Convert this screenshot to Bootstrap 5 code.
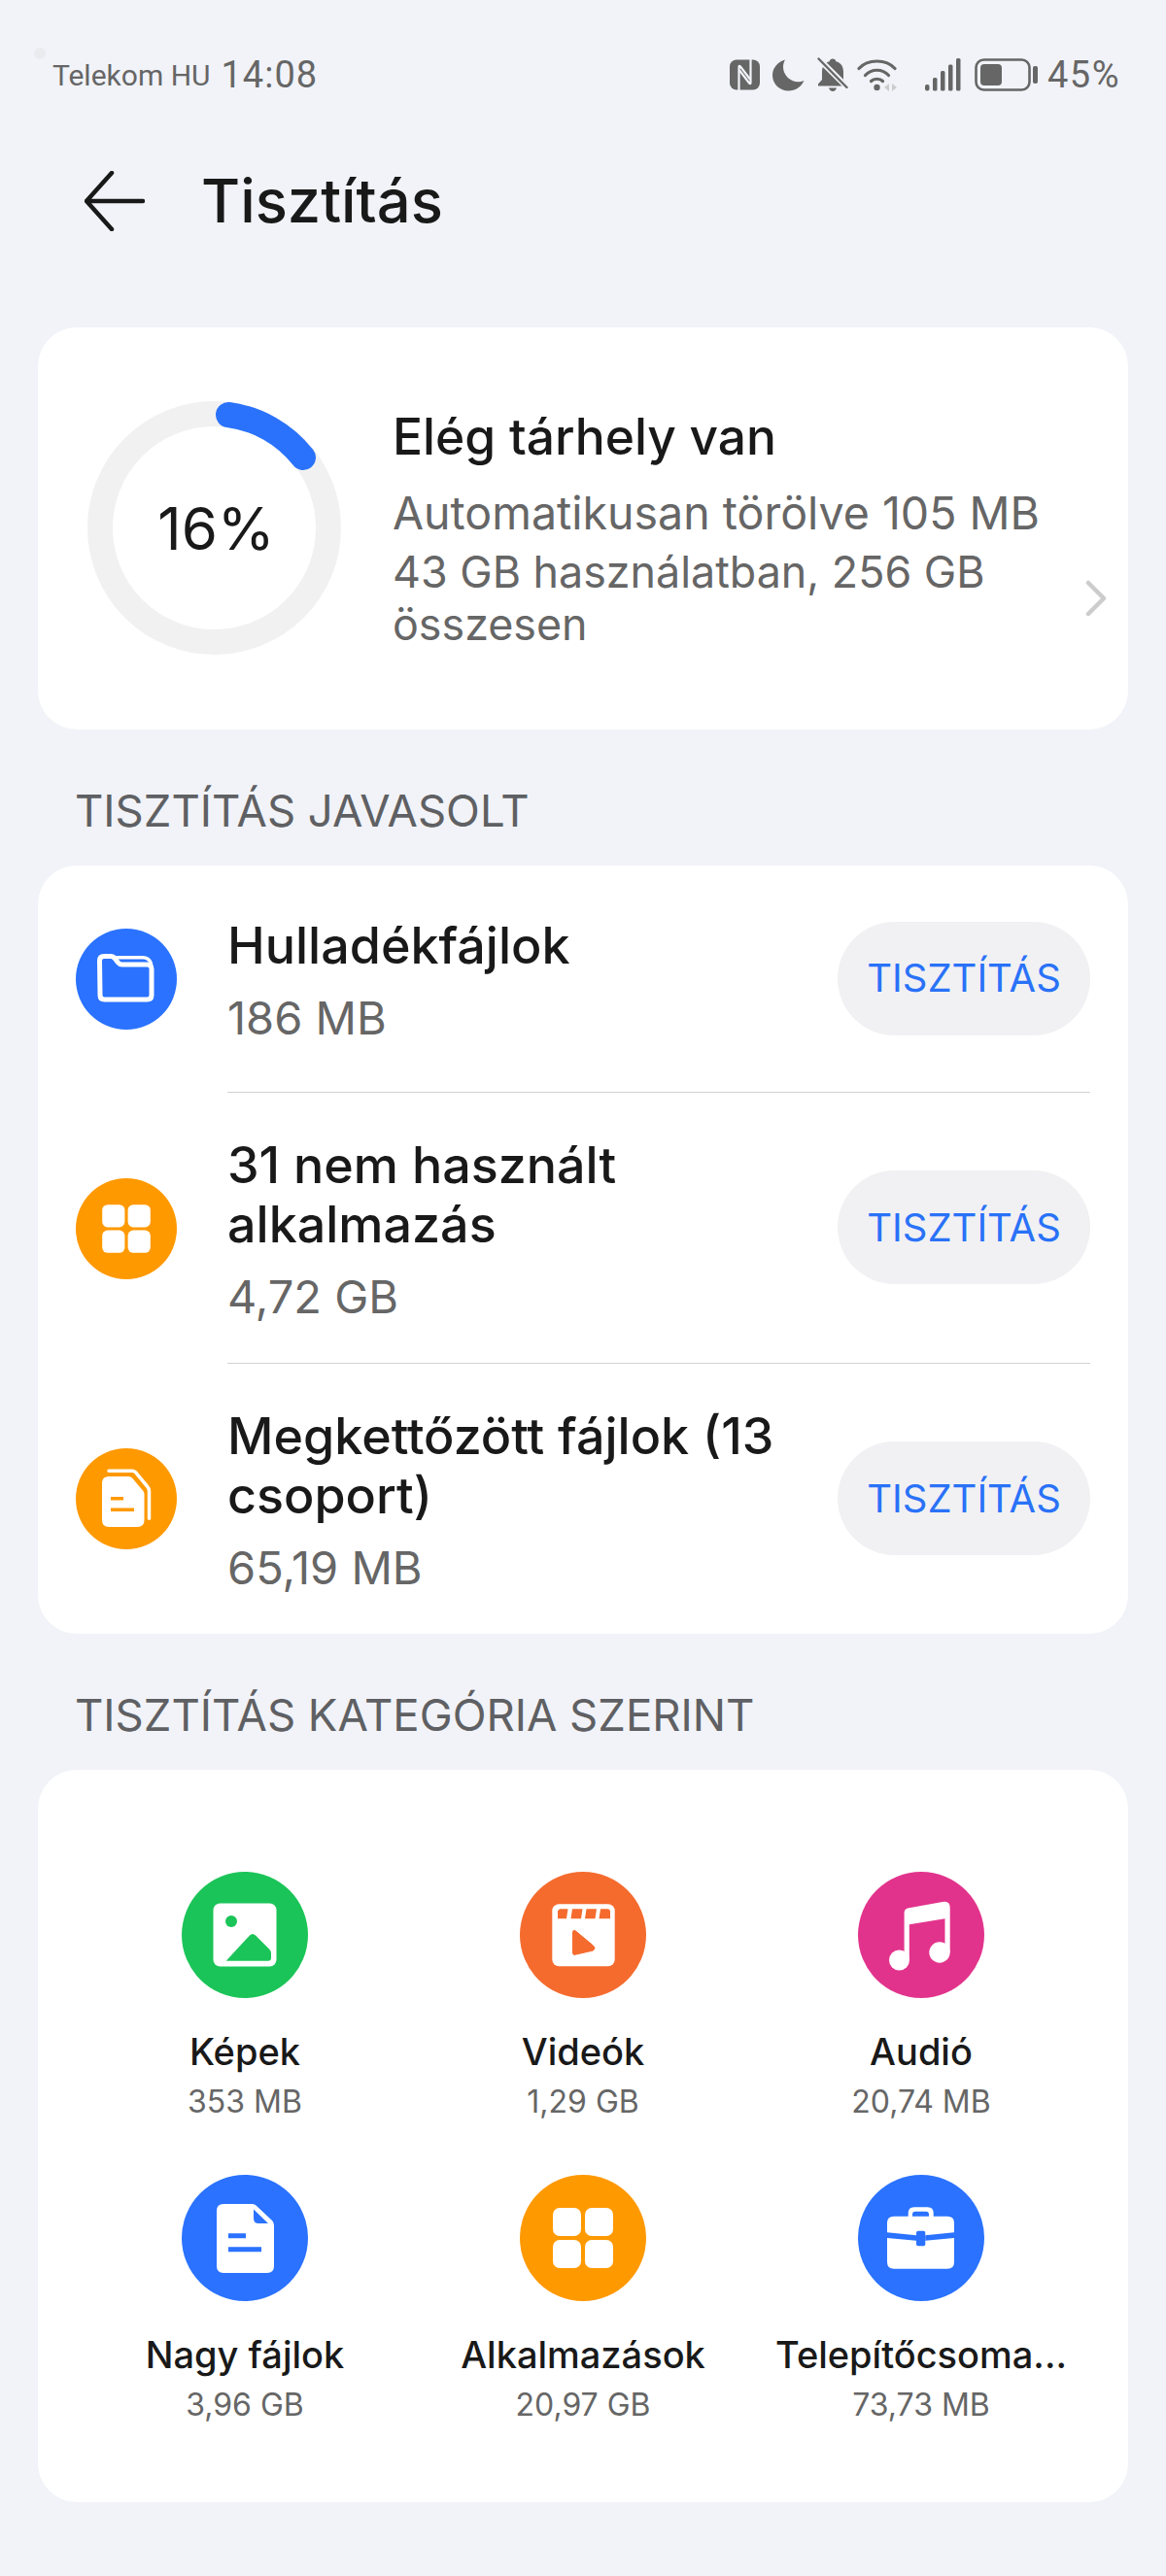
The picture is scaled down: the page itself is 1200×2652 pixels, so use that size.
<!DOCTYPE html>
<html lang="hu">
<head>
    <meta charset="UTF-8">
    <meta name="viewport" content="width=device-width, initial-scale=1.0">
    <title>Tisztítás</title>
    <link href="https://cdn.jsdelivr.net/npm/bootstrap@5.3.0/dist/css/bootstrap.min.css" rel="stylesheet">
    <style>
        body {
            background-color: #f1f3f8;
            font-family: Inter, Roboto, "Liberation Sans", sans-serif;
            color: #191919;
        }
        .screen { padding: 45px 39px 0; position: relative; }
        .rec-dot {
            position: absolute; left: 35px; top: 49px;
            width: 12px; height: 12px; border-radius: 50%; background: #e9ebef;
        }
        .status-bar {
            height: 64px; padding: 0 8px 0 15px;
            color: #666; fill: #666;
        }
        .carrier { font-family: Roboto, sans-serif; font-size: 30px; margin-right: 11px; }
        .clock { font-family: Roboto, sans-serif; font-size: 38px; letter-spacing: 1px; }
        .battery-pct { font-family: Roboto, sans-serif; font-size: 38px; letter-spacing: 1.5px; margin-left: 9px; }
        .status-icons svg { display: block; }
        .gap-13 { margin-left: 13px; }
        .gap-9 { margin-left: 9px; }
        .gap-28 { margin-left: 28px; }
        .gap-14 { margin-left: 14px; }
        .top-bar { height: 196px; margin-bottom: 32px; padding-left: 48px; }
        .top-bar h1 { font-size: 61.5px; font-weight: 500; margin: 0 0 0 58px; line-height: 80px; }
        .panel { border-radius: 40px; background: #fff; }
        .panel-storage { height: 414px; padding: 76px 22px 0 51px; }
        .ring { width: 261px; height: 261px; flex-shrink: 0; }
        .ring-label { font-size: 60px; padding-left: 4px; }
        .storage-text { margin-left: 53px; padding-top: 4px; }
        .storage-text h2 { font-size: 51.5px; font-weight: 500; line-height: 64px; margin: 0 0 20px; }
        .storage-text p { font-size: 46.5px; line-height: 54px; color: #666; margin: 0 0 7px; }
        .storage-text p.storage-total { font-size: 44.8px; }
        .chevron { margin-top: 184px; flex-shrink: 0; }
        .section-title { font-size: 45.5px; line-height: 44px; color: #5f6063; padding: 62px 38px 34px; margin: 0; font-weight: 400; }
        .clean-item { padding-left: 39px; }
        .item-icon { width: 104px; height: 104px; flex-shrink: 0; margin-right: 52px; }
        .item-body { padding: 40px 0 41px; margin-right: 39px; min-height: 234px; border-bottom: 1px solid #d2d2d2; }
        .clean-item:last-child .item-body { border-bottom: 0; }
        .item-text { padding-top: 4px; }
        .item-title { font-size: 52px; line-height: 61px; font-weight: 500; }
        .item-size { font-size: 47px; line-height: 54px; color: #666; margin-top: 17px; }
        .btn-clean {
            width: 260px; height: 117px; flex-shrink: 0; padding: 0;
            background: #f1f1f3; color: #2a72f8; font-size: 40px; border: 0; margin-left: 28px;
        }
        .panel-cats { padding: 105px 39px 79px; }
        .cat-cell { text-align: center; height: 312px; }
        .cat-cell:nth-child(n+4) { height: 258px; }
        .cat-icon { width: 130px; height: 130px; margin: 0 auto 25px; }
        .cat-name { font-size: 38px; line-height: 60px; font-weight: 500; }
        .cat-size { font-size: 32px; line-height: 44px; color: #666; }
        .tone-blue { background: #2a72ff; }
        .tone-orange { background: #ff9900; }
        .tone-green { background: #1bc458; }
        .tone-red { background: #f56b2e; }
        .tone-pink { background: #e2338c; }
        .rounded-circle svg { display: block; width: 100%; height: 100%; }
    </style>
</head>
<body>
    <svg width="0" height="0" class="position-absolute">
        <symbol id="apps" viewBox="0 0 130 130">
            <rect x="34" y="34" width="29" height="29" rx="7" fill="#fff"/>
            <rect x="67" y="34" width="29" height="29" rx="7" fill="#fff"/>
            <rect x="34" y="67" width="29" height="29" rx="7" fill="#fff"/>
            <rect x="67" y="67" width="29" height="29" rx="7" fill="#fff"/>
        </symbol>
    </svg>

    <div class="screen">
        <div class="rec-dot"></div>

        <!-- status bar -->
        <div class="status-bar d-flex align-items-center justify-content-between">
            <div class="d-flex align-items-center">
                <span class="carrier">Telekom HU</span>
                <span class="clock">14:08</span>
            </div>
            <div class="status-icons d-flex align-items-center">
                <svg width="31" height="32" viewBox="0 0 31 32">
                    <rect x="0" y="0.5" width="31" height="31" rx="7"/>
                    <g fill="none" stroke="#f1f3f8" stroke-width="2.200" stroke-linecap="round">
                        <path d="M9.500 32V8q0-2 1.500-.5L20.500 20"/>
                        <path d="M21.500 0V24q0 2-1.500 .5L10.500 12"/>
                    </g>
                </svg>
                <svg width="33" height="33" viewBox="0 0 33 33" class="gap-13">
                    <path d="M13 0.500C5.500 2.500 0 9 0 16.500 0 25.500 7.500 32.500 16.500 32.500c7 0 13-4 16-10.500-2 1-4 1.300-6 1.300C18 23.300 11 16 11 8c0-2.500.7-5.200 2-7.500z"/>
                </svg>
                <svg width="32" height="36" viewBox="0 0 32 36" class="gap-13">
                    <path d="M16 1.500c1.800 0 3 1 3.300 2.700C24.500 5.500 27 9.500 27 15v8l4 4.500v2H1v-2l4-4.500v-8C5 9.500 7.500 5.500 12.700 4.200 13 2.500 14.200 1.500 16 1.500z"/>
                    <path d="M12 31.500h8c-.6 2.200-2 3.500-4 3.500s-3.400-1.300-4-3.500z"/>
                    <path d="M1 1l30 30" stroke="#f1f3f8" stroke-width="6"/>
                    <path d="M1.500 1.500l29 29.500" stroke="#666" stroke-width="2.400" stroke-linecap="round"/>
                </svg>
                <svg width="42" height="34" viewBox="0 0 42 34" class="gap-9">
                    <g fill="none" stroke="#666" stroke-width="3.200" stroke-linecap="round">
                        <path d="M2 10.500C11 .5 30 .5 39 10.500"/>
                        <path d="M8.500 17.500C15 10.500 26 10.500 32.500 17.500"/>
                        <path d="M14.500 23.500C17.500 20.500 23.500 20.500 26.500 23.500"/>
                    </g>
                    <circle cx="20.500" cy="30" r="3.200"/>
                    <path d="M33 26l-5 4 5 4zM36 26l5 4-5 4z" fill="#ccc"/>
                </svg>
                <svg width="37" height="34" viewBox="0 0 37 34" class="gap-28">
                    <rect x="0" y="27" width="4.500" height="6.500" rx="2"/>
                    <rect x="8" y="20" width="4.500" height="13.500" rx="1.500"/>
                    <rect x="16" y="13" width="4.500" height="20.500" rx="1.500"/>
                    <rect x="24" y="6.500" width="4.500" height="27" rx="1.500"/>
                    <rect x="32" y="0" width="4.500" height="33.500" rx="1.500"/>
                </svg>
                <svg width="66" height="34" viewBox="0 0 66 34" class="gap-14">
                    <rect x="1.500" y="1.500" width="55" height="31" rx="8" fill="none" stroke="#666" stroke-width="2.600"/>
                    <rect x="6" y="6" width="22" height="22" rx="4"/>
                    <rect x="60" y="8" width="5" height="18" rx="2"/>
                </svg>
                <span class="battery-pct">45%</span>
            </div>
        </div>

        <!-- title bar -->
        <div class="top-bar d-flex align-items-center">
            <svg width="62" height="62" viewBox="0 0 62 62" fill="none" stroke="#191919" stroke-width="4.500" stroke-linecap="round" stroke-linejoin="round">
                <path d="M28 2L2 31l26 29M2 31h58"/>
            </svg>
            <h1>Tisztítás</h1>
        </div>

        <!-- storage summary -->
        <div class="card border-0 panel panel-storage d-flex flex-row align-items-start">
            <div class="ring position-relative">
                <svg width="261" height="261" viewBox="0 0 261 261" fill="none">
                    <circle cx="130.500" cy="130.500" r="117.500" stroke="#f1f1f1" stroke-width="26"/>
                    <path d="M145 14A117.500 117.500 0 0 1 222 58" stroke="#2a72fb" stroke-width="26" stroke-linecap="round"/>
                </svg>
                <div class="ring-label position-absolute top-0 start-0 w-100 h-100 d-flex align-items-center justify-content-center">16%</div>
            </div>
            <div class="storage-text flex-grow-1">
                <h2>Elég tárhely van</h2>
                <p>Automatikusan törölve 105 MB</p>
                <p class="storage-total">43 GB használatban, 256 GB összesen</p>
            </div>
            <svg class="chevron" width="22" height="38" viewBox="0 0 22 38" fill="none" stroke="#ccc" stroke-width="4.500" stroke-linecap="round" stroke-linejoin="round">
                <path d="M3 3l16 16L3 35"/>
            </svg>
        </div>

        <!-- recommended -->
        <h3 class="section-title">TISZTÍTÁS JAVASOLT</h3>
        <div class="card border-0 panel">
            <div class="clean-item d-flex align-items-center">
                <div class="item-icon rounded-circle tone-blue">
                    <svg viewBox="0 0 104 104">
                        <path d="M24.500 33q0-4.500 4.500-4.500h7q2.500 0 4 2l3.500 4.500q1.500 2 4 2h26q4.500 0 4.500 4.500v27q0 4.500-4.500 4.500h-44q-4.500 0-4.500-4.500z" fill="none" stroke="#fff" stroke-width="5" stroke-linejoin="round"/>
                        <path d="M38 29.800h31q6 0 8.500 6" fill="none" stroke="#fff" stroke-width="3.500" stroke-linecap="round"/>
                    </svg>
                </div>
                <div class="item-body d-flex align-items-center flex-grow-1">
                    <div class="item-text flex-grow-1">
                        <div class="item-title">Hulladékfájlok</div>
                        <div class="item-size">186 MB</div>
                    </div>
                    <button type="button" class="btn btn-clean rounded-pill">TISZTÍTÁS</button>
                </div>
            </div>
            <div class="clean-item d-flex align-items-center">
                <div class="item-icon rounded-circle tone-orange">
                    <svg viewBox="0 0 130 130"><use href="#apps"/></svg>
                </div>
                <div class="item-body d-flex align-items-center flex-grow-1">
                    <div class="item-text flex-grow-1">
                        <div class="item-title">31 nem használt alkalmazás</div>
                        <div class="item-size">4,72 GB</div>
                    </div>
                    <button type="button" class="btn btn-clean rounded-pill">TISZTÍTÁS</button>
                </div>
            </div>
            <div class="clean-item d-flex align-items-center">
                <div class="item-icon rounded-circle tone-orange">
                    <svg viewBox="0 0 104 104">
                        <path d="M34 29h20.500q2 0 3.500 1.500l11 13q1.500 1.500 1.500 3.500v27q0 7-7 7h-29.500q-7 0-7-7v-38q0-7 7-7z" fill="#fff"/>
                        <path d="M34 23.200h24q2 0 3.500 1.500l12 14.500q2 2 2 5v28" fill="none" stroke="#fff" stroke-width="3.500" stroke-linecap="round"/>
                        <path d="M36 50h13v3.500H36zM36 61.500h24v3.500H36z" fill="#ff9900"/>
                    </svg>
                </div>
                <div class="item-body d-flex align-items-center flex-grow-1">
                    <div class="item-text flex-grow-1">
                        <div class="item-title">Megkettőzött fájlok (13 csoport)</div>
                        <div class="item-size">65,19 MB</div>
                    </div>
                    <button type="button" class="btn btn-clean rounded-pill">TISZTÍTÁS</button>
                </div>
            </div>
        </div>

        <!-- by category -->
        <h3 class="section-title">TISZTÍTÁS KATEGÓRIA SZERINT</h3>
        <div class="card border-0 panel panel-cats">
            <div class="row g-0">
                <div class="col-4 cat-cell">
                    <div class="cat-icon rounded-circle tone-green">
                        <svg viewBox="0 0 130 130">
                            <rect x="32.500" y="32.500" width="65" height="65" rx="7" fill="#fff"/>
                            <circle cx="51" cy="51" r="6" fill="#1bc458"/>
                            <path d="M45.700 91.700L70 65.500q3-3 6 0L90 79.500q2 2 2 4.500v4.500q0 3.200-3 3.200z" fill="#1bc458"/>
                        </svg>
                    </div>
                    <div class="cat-name">Képek</div>
                    <div class="cat-size">353 MB</div>
                </div>
                <div class="col-4 cat-cell">
                    <div class="cat-icon rounded-circle tone-red">
                        <svg viewBox="0 0 130 130">
                            <rect x="33.300" y="33.300" width="64.400" height="64" rx="7" fill="#fff"/>
                            <path d="M41 38.300h8.500l-1.500 10h-9v-8zM54 38.300h10.500l-1.500 10H52.500zM68.500 38.300H79l-1.500 10H67zM83 38.300h7q3 0 3 3v7H81.500z" fill="#f56b2e"/>
                            <path d="M54.500 63q0-4 3-2l18 15q3 2.500 0 5L58 85q-3.500 1.500-3.500-2z" fill="#f56b2e" stroke="#f56b2e" stroke-linejoin="round"/>
                        </svg>
                    </div>
                    <div class="cat-name">Videók</div>
                    <div class="cat-size">1,29 GB</div>
                </div>
                <div class="col-4 cat-cell">
                    <div class="cat-icon rounded-circle tone-pink">
                        <svg viewBox="0 0 130 130">
                            <path d="M47.600 42q0-3.500 3.500-4.500L87 31q7.700-1.500 7.700 6v46h-5.200V48.300L52.800 54.300V91h-5.200z" fill="#fff"/>
                            <circle cx="42.500" cy="91" r="10.500" fill="#fff"/>
                            <circle cx="84" cy="83" r="10.700" fill="#fff"/>
                        </svg>
                    </div>
                    <div class="cat-name">Audió</div>
                    <div class="cat-size">20,74 MB</div>
                </div>
                <div class="col-4 cat-cell">
                    <div class="cat-icon rounded-circle tone-blue">
                        <svg viewBox="0 0 130 130">
                            <path d="M43 30h30q2 0 3.500 1.500L93 47q2 2 2 5v42q0 7-7 7H43q-7 0-7-7V37q0-7 7-7z" fill="#fff"/>
                            <path d="M74 35.500L89 50H79q-5 0-5-5z" fill="#2a72ff"/>
                            <path d="M48 60.300h18v5H48zM48 74.300h34v5H48z" fill="#2a72ff"/>
                        </svg>
                    </div>
                    <div class="cat-name">Nagy fájlok</div>
                    <div class="cat-size">3,96 GB</div>
                </div>
                <div class="col-4 cat-cell">
                    <div class="cat-icon rounded-circle tone-orange">
                        <svg viewBox="0 0 130 130"><use href="#apps"/></svg>
                    </div>
                    <div class="cat-name">Alkalmazások</div>
                    <div class="cat-size">20,97 GB</div>
                </div>
                <div class="col-4 cat-cell">
                    <div class="cat-icon rounded-circle tone-blue">
                        <svg viewBox="0 0 130 130">
                            <path d="M37 42.700h14.700v-3.400q0-6 6-6h14q6 0 6 6v3.400H92q7 0 7 7v40q0 7-7 7H37q-7 0-7-7v-40q0-7 7-7z" fill="#fff"/>
                            <path d="M56 42.700v-2q0-3 3-3h11q3 0 3 3v2z" fill="#2a72ff"/>
                            <path d="M30 59.300l30 3v5.400l-30-2.700zM69.300 62.300l29.700-3v5.700l-29.700 2.700z" fill="#2a72ff"/>
                            <rect x="60" y="57.700" width="9.300" height="15.600" rx="2" fill="#2a72ff"/>
                        </svg>
                    </div>
                    <div class="cat-name">Telepítőcsoma...</div>
                    <div class="cat-size">73,73 MB</div>
                </div>
            </div>
        </div>
    </div>

    <script src="https://cdn.jsdelivr.net/npm/bootstrap@5.3.0/dist/js/bootstrap.bundle.min.js"></script>
</body>
</html>
